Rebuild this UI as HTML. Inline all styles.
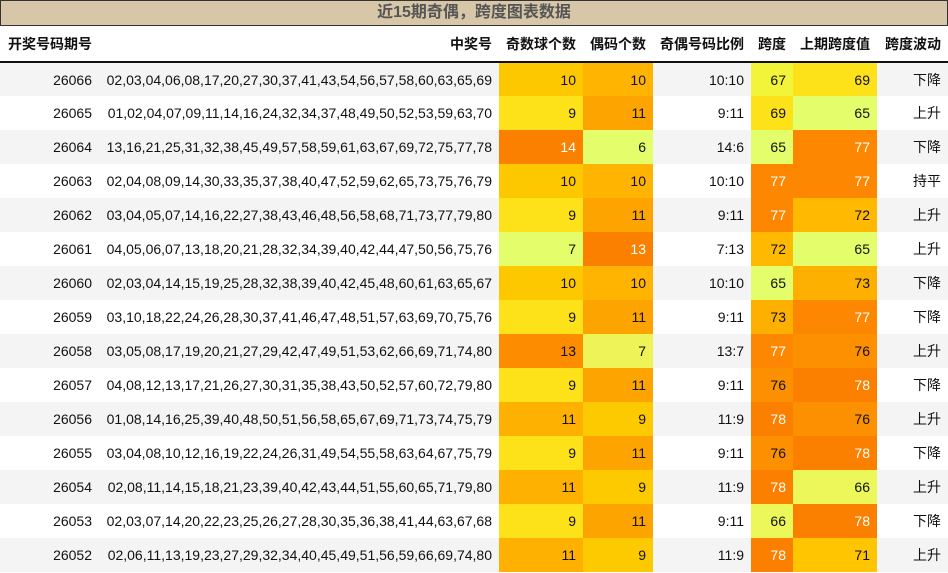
<!DOCTYPE html>
<html><head><meta charset="utf-8"><style>
*{margin:0;padding:0;box-sizing:border-box}
body{width:948px;height:573px;background:#fff;font-family:"Liberation Sans","Noto Sans CJK SC",sans-serif;font-size:14px;color:#111;overflow:hidden}
.title{position:absolute;left:0;top:0;width:948px;height:26px;background:#d7c6a8;border:1px solid #333;text-align:center;font-weight:bold;font-size:16px;line-height:24px;color:#555}
table{position:absolute;left:0;top:26px;border-collapse:collapse;table-layout:fixed;width:948px}
th{height:36px;font-weight:bold;font-size:14px;text-align:right;padding-right:7px;border-bottom:2px solid #111}
td{height:34px;text-align:right;padding-right:7px;white-space:nowrap}
tr.s td{background:#f4f4f4}
th.l{text-align:left;padding-left:8px}
.w{color:#fff}
</style></head><body>
<div class="title">近15期奇偶，跨度图表数据</div>
<table>
<colgroup><col style="width:99px"><col style="width:400px"><col style="width:84px"><col style="width:70px"><col style="width:98px"><col style="width:42px"><col style="width:84px"><col style="width:71px"></colgroup>
<tr><th class="l">开奖号码期号</th><th>中奖号</th><th>奇数球个数</th><th>偶码个数</th><th>奇偶号码比例</th><th>跨度</th><th>上期跨度值</th><th>跨度波动</th></tr>
<tr class="s"><td>26066</td><td>02,03,04,06,08,17,20,27,30,37,41,43,54,56,57,58,60,63,65,69</td><td style="background:#fec800">10</td><td style="background:#feb400">10</td><td>10:10</td><td style="background:#f2f43a">67</td><td style="background:#fde119">69</td><td>下降</td></tr>
<tr><td>26065</td><td>01,02,04,07,09,11,14,16,24,32,34,37,48,49,50,52,53,59,63,70</td><td style="background:#fde119">9</td><td style="background:#fea400">11</td><td>9:11</td><td style="background:#fde119">69</td><td style="background:#e3fd6b">65</td><td>上升</td></tr>
<tr class="s"><td>26064</td><td>13,16,21,25,31,32,38,45,49,57,58,59,61,63,67,69,72,75,77,78</td><td class="w" style="background:#fc8000">14</td><td style="background:#e3fd6b">6</td><td>14:6</td><td style="background:#e3fd6b">65</td><td class="w" style="background:#fd8700">77</td><td>下降</td></tr>
<tr><td>26063</td><td>02,04,08,09,14,30,33,35,37,38,40,47,52,59,62,65,73,75,76,79</td><td style="background:#fec800">10</td><td style="background:#feb400">10</td><td>10:10</td><td class="w" style="background:#fd8700">77</td><td class="w" style="background:#fd8700">77</td><td>持平</td></tr>
<tr class="s"><td>26062</td><td>03,04,05,07,14,16,22,27,38,43,46,48,56,58,68,71,73,77,79,80</td><td style="background:#fde119">9</td><td style="background:#fea400">11</td><td>9:11</td><td class="w" style="background:#fd8700">77</td><td style="background:#feb900">72</td><td>上升</td></tr>
<tr><td>26061</td><td>04,05,06,07,13,18,20,21,28,32,34,39,40,42,44,47,50,56,75,76</td><td style="background:#e3fd6b">7</td><td class="w" style="background:#fc8000">13</td><td>7:13</td><td style="background:#feb900">72</td><td style="background:#e3fd6b">65</td><td>上升</td></tr>
<tr class="s"><td>26060</td><td>02,03,04,14,15,19,25,28,32,38,39,40,42,45,48,60,61,63,65,67</td><td style="background:#fec800">10</td><td style="background:#feb400">10</td><td>10:10</td><td style="background:#e3fd6b">65</td><td style="background:#feb000">73</td><td>下降</td></tr>
<tr><td>26059</td><td>03,10,18,22,24,26,28,30,37,41,46,47,48,51,57,63,69,70,75,76</td><td style="background:#fde119">9</td><td style="background:#fea400">11</td><td>9:11</td><td style="background:#feb000">73</td><td class="w" style="background:#fd8700">77</td><td>下降</td></tr>
<tr class="s"><td>26058</td><td>03,05,08,17,19,20,21,27,29,42,47,49,51,53,62,66,69,71,74,80</td><td style="background:#fd8c00">13</td><td style="background:#eef458">7</td><td>13:7</td><td class="w" style="background:#fd8700">77</td><td style="background:#fd9000">76</td><td>上升</td></tr>
<tr><td>26057</td><td>04,08,12,13,17,21,26,27,30,31,35,38,43,50,52,57,60,72,79,80</td><td style="background:#fde119">9</td><td style="background:#fea400">11</td><td>9:11</td><td style="background:#fd9000">76</td><td class="w" style="background:#fc8000">78</td><td>下降</td></tr>
<tr class="s"><td>26056</td><td>01,08,14,16,25,39,40,48,50,51,56,58,65,67,69,71,73,74,75,79</td><td style="background:#feb100">11</td><td style="background:#fdca00">9</td><td>11:9</td><td class="w" style="background:#fc8000">78</td><td style="background:#fd9000">76</td><td>上升</td></tr>
<tr><td>26055</td><td>03,04,08,10,12,16,19,22,24,26,31,49,54,55,58,63,64,67,75,79</td><td style="background:#fde119">9</td><td style="background:#fea400">11</td><td>9:11</td><td style="background:#fd9000">76</td><td class="w" style="background:#fc8000">78</td><td>下降</td></tr>
<tr class="s"><td>26054</td><td>02,08,11,14,15,18,21,23,39,40,42,43,44,51,55,60,65,71,79,80</td><td style="background:#feb100">11</td><td style="background:#fdca00">9</td><td>11:9</td><td class="w" style="background:#fc8000">78</td><td style="background:#ecf85a">66</td><td>上升</td></tr>
<tr><td>26053</td><td>02,03,07,14,20,22,23,25,26,27,28,30,35,36,38,41,44,63,67,68</td><td style="background:#fde119">9</td><td style="background:#fea400">11</td><td>9:11</td><td style="background:#ecf85a">66</td><td class="w" style="background:#fc8000">78</td><td>下降</td></tr>
<tr class="s"><td>26052</td><td>02,06,11,13,19,23,27,29,32,34,40,45,49,51,56,59,66,69,74,80</td><td style="background:#feb100">11</td><td style="background:#fdca00">9</td><td>11:9</td><td class="w" style="background:#fc8000">78</td><td style="background:#fec500">71</td><td>上升</td></tr>
</table>
</body></html>
